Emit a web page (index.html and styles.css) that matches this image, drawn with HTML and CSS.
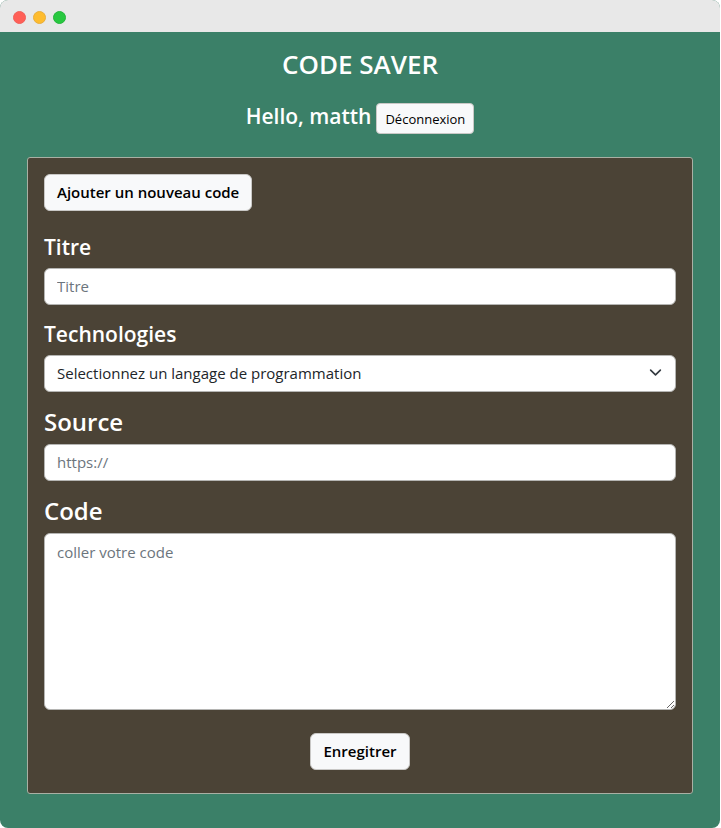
FILE: index.html
```html
<!DOCTYPE html>
<html lang="fr">
<head>
<meta charset="utf-8">
<meta name="viewport" content="width=device-width, initial-scale=1">
<title>Code Saver</title>
<link rel="stylesheet" href="styles.css">
</head>
<body>
<div class="window">
  <div class="titlebar">
    <span class="dot dot-close"></span>
    <span class="dot dot-min"></span>
    <span class="dot dot-max"></span>
  </div>
  <main class="page">
    <h1 class="brand">CODE SAVER</h1>
    <div class="user">
      <h2 class="greeting">Hello, matth</h2>
      <button type="button" class="btn btn-small">Déconnexion</button>
    </div>
    <section class="panel">
      <button type="button" class="btn btn-add">Ajouter un nouveau code</button>
      <form class="form">
        <div class="field">
          <label for="title">Titre</label>
          <input class="control" type="text" id="title" placeholder="Titre">
        </div>
        <div class="field">
          <label for="tech">Technologies</label>
          <div class="select-wrap">
            <select class="control" id="tech">
              <option>Selectionnez un langage de programmation</option>
            </select>
            <svg class="chevron" viewBox="0 0 16 16" aria-hidden="true"><path d="m2 5 6 6 6-6"/></svg>
          </div>
        </div>
        <div class="field field-large">
          <label for="source">Source</label>
          <input class="control" type="text" id="source" placeholder="https://">
        </div>
        <div class="field field-large">
          <label for="code">Code</label>
          <textarea class="control" id="code" placeholder="coller votre code"></textarea>
        </div>
        <button type="button" class="btn btn-save">Enregitrer</button>
      </form>
    </section>
  </main>
</div>
</body>
</html>
```
FILE: styles.css
```css
* {
  box-sizing: border-box;
}

body {
  margin: 0;
  background: #fff;
  color: #fff;
  font: 15px/24px "Open Sans", "Noto Sans", sans-serif;
}

.window {
  display: flex;
  flex-direction: column;
  min-height: 100vh;
  margin-right: 1px;
  border-radius: 8px;
  overflow: hidden;
  background: #3b8068;
}

.titlebar {
  display: flex;
  align-items: center;
  gap: 7px;
  height: 32px;
  padding: 2px 13px 0;
  background: #e8e8e8;
}

.dot {
  width: 13px;
  height: 13px;
  border: 1px solid;
  border-radius: 50%;
}

.dot-close {
  background: #ff5f57;
  border-color: #f0605a;
}

.dot-min {
  background: #febc2e;
  border-color: #e8ae3c;
}

.dot-max {
  background: #28c840;
  border-color: #24b53b;
}

.page {
  padding: 15px 27px 33px;
}

.brand {
  margin: 0;
  font-size: 26px;
  line-height: 34px;
  font-weight: 600;
  text-align: center;
}

.user {
  display: flex;
  justify-content: center;
  gap: 5px;
  margin: 22px 0 23px;
}

.greeting {
  margin: 0;
  font-size: 21px;
  line-height: 26px;
  font-weight: 600;
}

.btn {
  height: 37px;
  padding: 0 12px 2px;
  border: 1px solid #c9c8c6;
  border-radius: 6px;
  background: #f8f9fa;
  color: #000;
  font: 600 15px/24px "Open Sans", "Noto Sans", sans-serif;
}

.btn-small {
  height: 31px;
  padding: 0 8px;
  border-radius: 4px;
  font-size: 13px;
  font-weight: 400;
}

.panel {
  padding: 16px;
  border: 1px solid #a9b0a4;
  border-radius: 3px;
  background: #4b4336;
}

.btn-add {
  display: block;
}

.form {
  display: flex;
  flex-direction: column;
  gap: 16px;
  margin-top: 23px;
}

.field {
  display: flex;
  flex-direction: column;
  gap: 8px;
}

.field label {
  font-size: 21px;
  line-height: 26px;
  font-weight: 600;
}

.field-large label {
  font-size: 24px;
  line-height: 28px;
}

.control {
  display: block;
  width: 100%;
  height: 37px;
  padding: 4px 12px 6px;
  border: 1px solid #b5b5b3;
  border-radius: 6px;
  background: #fff;
  color: #212529;
  font: inherit;
  appearance: none;
}

.control::placeholder {
  color: #6c757d;
  opacity: 1;
}

textarea.control {
  height: 177px;
  padding-top: 6px;
  resize: vertical;
}

.select-wrap {
  position: relative;
}

.chevron {
  position: absolute;
  top: 11px;
  right: 14px;
  width: 13px;
  height: 13px;
  fill: none;
  stroke: #343a40;
  stroke-width: 2;
  stroke-linecap: round;
  stroke-linejoin: round;
  pointer-events: none;
}

.btn-save {
  align-self: center;
  margin-top: 7px;
  margin-bottom: 7px;
}
```
